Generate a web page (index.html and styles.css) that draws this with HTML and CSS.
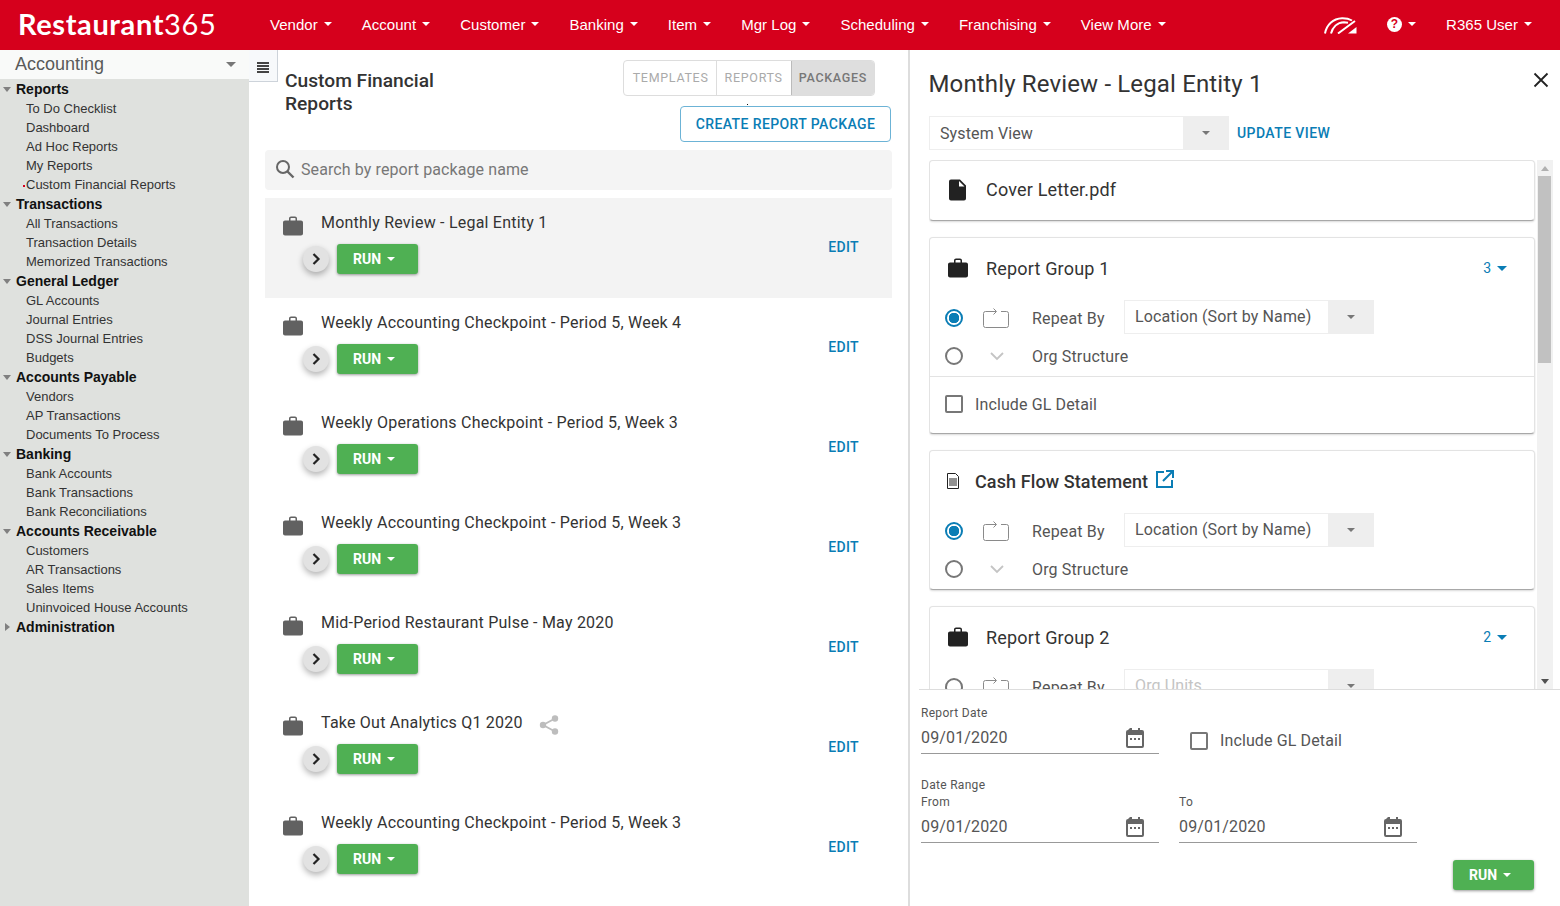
FILE: index.html
```html
<!DOCTYPE html>
<html lang="en">
<head>
<meta charset="utf-8">
<title>Restaurant365</title>
<link rel="stylesheet" href="styles.css">
</head>
<body>
<svg class="defs" width="0" height="0" aria-hidden="true">
  <symbol id="case" viewBox="0 0 24 24"><path fill-rule="evenodd" d="M20 6.500h-4V4.600c0-1.200-.9-2.100-2-2.100h-4c-1.100 0-2 .9-2 2.100v1.900H4c-1.100 0-2 .9-2 2v11c0 1.100.9 2 2 2h16c1.100 0 2-.9 2-2v-11c0-1.100-.9-2-2-2zm-5.500 0h-5V4.500c0-.3.200-.5.500-.5h4c.3 0 .5.200.5.500z"/></symbol>
  <symbol id="repeat" viewBox="0 0 26 20"><path fill="none" stroke="currentColor" d="M13 3.500H2.500a2 2 0 0 0-2 2v12a2 2 0 0 0 2 2h21a2 2 0 0 0 2-2v-12a2 2 0 0 0-2-2H18M10.500.5l3 3-3 3"/></symbol>
  <symbol id="cal" viewBox="0 0 18 20"><path fill="currentColor" fill-rule="evenodd" d="M4 0h2v2h6V0h2v2h2a2 2 0 0 1 2 2v14a2 2 0 0 1-2 2H2a2 2 0 0 1-2-2V4a2 2 0 0 1 2-2zM2 7v11h14V7zm2 3h2v2H4zm4 0h2v2H8zm4 0h2v2h-2z"/></symbol>
  <symbol id="chev" viewBox="0 0 12 14"><path fill="none" stroke="currentColor" stroke-width="2.200" d="M3.500 2l5 5-5 5"/></symbol>
</svg>

<header class="topbar">
  <div class="logo">Restaurant<span class="logo-num">365</span></div>
  <nav class="nav">
    <a class="nav-item">Vendor<i class="caret"></i></a>
    <a class="nav-item">Account<i class="caret"></i></a>
    <a class="nav-item">Customer<i class="caret"></i></a>
    <a class="nav-item">Banking<i class="caret"></i></a>
    <a class="nav-item">Item<i class="caret"></i></a>
    <a class="nav-item">Mgr Log<i class="caret"></i></a>
    <a class="nav-item">Scheduling<i class="caret"></i></a>
    <a class="nav-item">Franchising<i class="caret"></i></a>
    <a class="nav-item">View More<i class="caret"></i></a>
  </nav>
  <div class="top-right">
    <svg class="gauge" width="34" height="17" viewBox="0 0 34 17"><path fill="none" stroke="#fff" stroke-width="2" d="M1 16.500C2.500 8 9 1.500 18 1.200c4-.1 7 .6 10 2.300M7 16.500C8.500 10.500 13 5.500 20 5.200c1.500 0 2.800.2 4 .5M14 16.500L31 4"/><path fill="#fff" d="M24 16.500l8.500-6.500v6.500z"/></svg>
    <div class="help"><span class="help-mark">?</span><i class="caret"></i></div>
    <a class="user">R365 User<i class="caret"></i></a>
  </div>
</header>

<div class="body">
  <aside class="sidebar">
    <div class="side-head"><span>Accounting</span><i class="side-caret"></i></div>
    <ul class="tree">
      <li class="cat">Reports</li>
      <li class="leaf">To Do Checklist</li>
      <li class="leaf">Dashboard</li>
      <li class="leaf">Ad Hoc Reports</li>
      <li class="leaf">My Reports</li>
      <li class="leaf leaf-current">Custom Financial Reports</li>
      <li class="cat">Transactions</li>
      <li class="leaf">All Transactions</li>
      <li class="leaf">Transaction Details</li>
      <li class="leaf">Memorized Transactions</li>
      <li class="cat">General Ledger</li>
      <li class="leaf">GL Accounts</li>
      <li class="leaf">Journal Entries</li>
      <li class="leaf">DSS Journal Entries</li>
      <li class="leaf">Budgets</li>
      <li class="cat">Accounts Payable</li>
      <li class="leaf">Vendors</li>
      <li class="leaf">AP Transactions</li>
      <li class="leaf">Documents To Process</li>
      <li class="cat">Banking</li>
      <li class="leaf">Bank Accounts</li>
      <li class="leaf">Bank Transactions</li>
      <li class="leaf">Bank Reconciliations</li>
      <li class="cat">Accounts Receivable</li>
      <li class="leaf">Customers</li>
      <li class="leaf">AR Transactions</li>
      <li class="leaf">Sales Items</li>
      <li class="leaf">Uninvoiced House Accounts</li>
      <li class="cat cat-closed">Administration</li>
    </ul>
  </aside>

  <main class="main">
    <button class="menu-toggle" aria-label="Toggle menu"><i></i><i></i><i></i><i></i></button>
    <div class="main-head">
      <h1 class="page-title">Custom Financial<br>Reports</h1>
      <div class="main-actions">
        <div class="tabs">
          <span class="tab">TEMPLATES</span>
          <span class="tab">REPORTS</span>
          <span class="tab tab-on">PACKAGES</span>
        </div>
        <i class="speck"></i>
        <button class="btn-outline">CREATE REPORT PACKAGE</button>
      </div>
    </div>
    <div class="search">
      <svg width="20" height="20" viewBox="0 0 20 20"><circle cx="8" cy="8" r="6" fill="none" stroke="#666" stroke-width="2"/><path stroke="#666" stroke-width="2.400" d="M12.500 12.500l6 6"/></svg>
      <span>Search by report package name</span>
    </div>
    <div class="list">
      <article class="pkg pkg-on">
        <div class="pkg-main">
          <div class="pkg-head"><svg class="pkg-icon"><use href="#case"/></svg><span class="pkg-title">Monthly Review - Legal Entity 1</span></div>
          <div class="pkg-actions"><span class="expand"><svg width="12" height="14"><use href="#chev"/></svg></span><button class="run">RUN<i class="caret"></i></button></div>
        </div>
        <a class="edit">EDIT</a>
      </article>
      <article class="pkg">
        <div class="pkg-main">
          <div class="pkg-head"><svg class="pkg-icon"><use href="#case"/></svg><span class="pkg-title">Weekly Accounting Checkpoint - Period 5, Week 4</span></div>
          <div class="pkg-actions"><span class="expand"><svg width="12" height="14"><use href="#chev"/></svg></span><button class="run">RUN<i class="caret"></i></button></div>
        </div>
        <a class="edit">EDIT</a>
      </article>
      <article class="pkg">
        <div class="pkg-main">
          <div class="pkg-head"><svg class="pkg-icon"><use href="#case"/></svg><span class="pkg-title">Weekly Operations Checkpoint - Period 5, Week 3</span></div>
          <div class="pkg-actions"><span class="expand"><svg width="12" height="14"><use href="#chev"/></svg></span><button class="run">RUN<i class="caret"></i></button></div>
        </div>
        <a class="edit">EDIT</a>
      </article>
      <article class="pkg">
        <div class="pkg-main">
          <div class="pkg-head"><svg class="pkg-icon"><use href="#case"/></svg><span class="pkg-title">Weekly Accounting Checkpoint - Period 5, Week 3</span></div>
          <div class="pkg-actions"><span class="expand"><svg width="12" height="14"><use href="#chev"/></svg></span><button class="run">RUN<i class="caret"></i></button></div>
        </div>
        <a class="edit">EDIT</a>
      </article>
      <article class="pkg">
        <div class="pkg-main">
          <div class="pkg-head"><svg class="pkg-icon"><use href="#case"/></svg><span class="pkg-title">Mid-Period Restaurant Pulse - May 2020</span></div>
          <div class="pkg-actions"><span class="expand"><svg width="12" height="14"><use href="#chev"/></svg></span><button class="run">RUN<i class="caret"></i></button></div>
        </div>
        <a class="edit">EDIT</a>
      </article>
      <article class="pkg">
        <div class="pkg-main">
          <div class="pkg-head"><svg class="pkg-icon"><use href="#case"/></svg><span class="pkg-title">Take Out Analytics Q1 2020</span>
            <svg class="share" width="20" height="20" viewBox="0 0 20 20"><path fill="none" stroke="#bdbdbd" stroke-width="1.800" d="M16 3.500L4 10l12 6.500"/><circle cx="16" cy="3.500" r="3.200" fill="#bdbdbd"/><circle cx="4" cy="10" r="3.200" fill="#bdbdbd"/><circle cx="16" cy="16.500" r="3.200" fill="#bdbdbd"/></svg>
          </div>
          <div class="pkg-actions"><span class="expand"><svg width="12" height="14"><use href="#chev"/></svg></span><button class="run">RUN<i class="caret"></i></button></div>
        </div>
        <a class="edit">EDIT</a>
      </article>
      <article class="pkg">
        <div class="pkg-main">
          <div class="pkg-head"><svg class="pkg-icon"><use href="#case"/></svg><span class="pkg-title">Weekly Accounting Checkpoint - Period 5, Week 3</span></div>
          <div class="pkg-actions"><span class="expand"><svg width="12" height="14"><use href="#chev"/></svg></span><button class="run">RUN<i class="caret"></i></button></div>
        </div>
        <a class="edit">EDIT</a>
      </article>
    </div>
  </main>

  <section class="detail">
    <div class="detail-head">
      <h2 class="detail-title">Monthly Review - Legal Entity 1</h2>
      <svg class="close" width="16" height="16" viewBox="0 0 16 16"><path stroke="#222" stroke-width="1.800" d="M1.500 1.500l13 13M14.500 1.500l-13 13"/></svg>
    </div>
    <div class="view-row">
      <div class="select select-view"><span class="select-text">System View</span><span class="select-btn"><i class="gcaret"></i></span></div>
      <a class="update">UPDATE VIEW</a>
    </div>
    <div class="scroller">
      <div class="cards">
        <div class="card">
          <div class="card-head card-head-cover">
            <svg class="head-icon" width="24" height="24" viewBox="0 0 24 24"><path fill="#222" fill-rule="evenodd" d="M5 1.500h9l6 6v13a2 2 0 0 1-2 2H5a2 2 0 0 1-2-2V3.500a2 2 0 0 1 2-2zm8 1.500v5.500h5.500z"/></svg>
            <span class="card-title">Cover Letter.pdf</span>
          </div>
        </div>
        <div class="card">
          <div class="card-head">
            <svg class="head-icon head-case"><use href="#case"/></svg>
            <span class="card-title">Report Group 1</span>
            <span class="count">3<i class="bcaret"></i></span>
          </div>
          <div class="opt-row opt-first">
            <i class="radio radio-on"></i>
            <svg class="repeat" width="26" height="20"><use href="#repeat"/></svg>
            <span class="opt-label">Repeat By</span>
            <div class="select select-opt"><span class="select-text">Location (Sort by Name)</span><span class="select-btn"><i class="gcaret"></i></span></div>
          </div>
          <div class="opt-row opt-second">
            <i class="radio"></i>
            <svg class="chev-down" width="26" height="12" viewBox="0 0 26 12"><path fill="none" stroke="#c4c4c4" stroke-width="1.800" d="M8 3l6 6 6-6"/></svg>
            <span class="opt-label">Org Structure</span>
          </div>
          <div class="card-foot">
            <i class="check"></i><span class="check-label">Include GL Detail</span>
          </div>
        </div>
        <div class="card">
          <div class="card-head">
            <svg class="doc-icon" width="14" height="16" viewBox="0 0 14 16"><path fill="none" stroke="#222" d="M1.500.5h8l3 3v12h-11z"/><path stroke="#222" d="M3 6h8M3 8h8M3 10h8M3 12h8"/></svg>
            <span class="card-title card-title-doc">Cash Flow Statement</span>
            <svg class="ext" width="18" height="18" viewBox="0 0 18 18"><path fill="none" stroke="#0a7db5" stroke-width="2" d="M8 2H1v15h15v-7M7 11l9-9M10 1h7v7"/></svg>
          </div>
          <div class="opt-row opt-first">
            <i class="radio radio-on"></i>
            <svg class="repeat" width="26" height="20"><use href="#repeat"/></svg>
            <span class="opt-label">Repeat By</span>
            <div class="select select-opt"><span class="select-text">Location (Sort by Name)</span><span class="select-btn"><i class="gcaret"></i></span></div>
          </div>
          <div class="opt-row opt-second">
            <i class="radio"></i>
            <svg class="chev-down" width="26" height="12" viewBox="0 0 26 12"><path fill="none" stroke="#c4c4c4" stroke-width="1.800" d="M8 3l6 6 6-6"/></svg>
            <span class="opt-label">Org Structure</span>
          </div>
        </div>
        <div class="card">
          <div class="card-head">
            <svg class="head-icon head-case"><use href="#case"/></svg>
            <span class="card-title">Report Group 2</span>
            <span class="count">2<i class="bcaret"></i></span>
          </div>
          <div class="opt-row opt-first">
            <i class="radio"></i>
            <svg class="repeat" width="26" height="20"><use href="#repeat"/></svg>
            <span class="opt-label">Repeat By</span>
            <div class="select select-opt"><span class="select-text select-muted">Org Units</span><span class="select-btn"><i class="gcaret"></i></span></div>
          </div>
        </div>
      </div>
      <div class="scrollbar">
        <span class="sb-arrow"><i class="sb-up"></i></span>
        <span class="sb-thumb"></span>
        <span class="sb-rest"></span>
        <span class="sb-arrow"><i class="sb-down"></i></span>
      </div>
    </div>
    <div class="form">
      <div class="form-row form-row-top">
        <div class="field">
          <label class="field-label">Report Date</label>
          <div class="field-input"><span>09/01/2020</span><svg class="cal" width="18" height="20"><use href="#cal"/></svg></div>
        </div>
        <div class="form-check"><i class="check"></i><span class="check-label">Include GL Detail</span></div>
      </div>
      <div class="range-label">Date Range</div>
      <div class="form-row">
        <div class="field">
          <label class="field-label">From</label>
          <div class="field-input"><span>09/01/2020</span><svg class="cal" width="18" height="20"><use href="#cal"/></svg></div>
        </div>
        <div class="field">
          <label class="field-label">To</label>
          <div class="field-input"><span>09/01/2020</span><svg class="cal" width="18" height="20"><use href="#cal"/></svg></div>
        </div>
      </div>
      <div class="form-foot"><button class="run">RUN<i class="caret"></i></button></div>
    </div>
  </section>
</div>
</body>
</html>
```
FILE: styles.css
```css
* { box-sizing: border-box; }
html, body { margin: 0; height: 100%; }
body { font-family: Roboto, "Liberation Sans", sans-serif; color: #333; background: #fff; overflow: hidden; width: 1560px; height: 906px; }
.defs { position: absolute; }
h1, h2 { margin: 0; }
ul { list-style: none; margin: 0; padding: 0; }
i { display: block; }
button { font-family: inherit; cursor: pointer; }

.topbar { height: 50px; padding-bottom: 2px; background: #d6001c; color: #fff; display: flex; align-items: center; font-family: "Liberation Sans", Arial, sans-serif; font-size: 15px; letter-spacing: .03px; }
.logo { width: 270px; padding-left: 18px; font-family: Lato, sans-serif; font-weight: 700; font-size: 29px; letter-spacing: .6px; line-height: 48px; }
.logo-num { font-weight: 400; }
.nav { display: flex; }
.nav-item, .user { display: flex; align-items: center; }
.nav-item { margin-right: 30px; }
.caret { width: 0; height: 0; border-left: 4.500px solid transparent; border-right: 4.500px solid transparent; border-top: 4px solid currentColor; margin-left: 6px; }
.top-right { margin-left: auto; display: flex; align-items: center; padding-right: 28px; }
.gauge { margin-right: 29px; margin-top: 2px; }
.help { display: flex; align-items: center; margin-right: 30px; }
.help-mark { width: 15px; height: 15px; border-radius: 50%; background: #fff; color: #d6001c; font-weight: 700; font-size: 12px; line-height: 15px; text-align: center; }

.body { display: flex; height: 856px; }
.sidebar { width: 249px; background: #dfe1de; flex: none; font-family: "Liberation Sans", Arial, sans-serif; }
.side-head { height: 29px; background: #f9faf9; display: flex; align-items: center; justify-content: space-between; padding: 0 13px 0 15px; font-size: 18px; color: #5a5a5a; }
.side-caret { width: 0; height: 0; border-left: 5.500px solid transparent; border-right: 5.500px solid transparent; border-top: 5px solid #777; }
.tree { padding-top: 1px; }
.cat { position: relative; height: 19px; line-height: 19px; margin-top: 1px; padding-left: 16px; font-size: 14px; font-weight: 700; color: #111; }
.tree .cat:first-child { margin-top: 0; }
.cat::before { content: ""; position: absolute; left: 3px; top: 7px; border-left: 4.500px solid transparent; border-right: 4.500px solid transparent; border-top: 5px solid #808080; }
.cat-closed::before { left: 5px; top: 5px; border-top: 4.500px solid transparent; border-bottom: 4.500px solid transparent; border-left: 5px solid #808080; border-right: 0; }
.leaf { position: relative; height: 19px; line-height: 19px; padding: 0 0 0 26px; font-size: 13px; color: #333; }
.leaf-current::before { content: ""; position: absolute; left: 23px; top: 10px; width: 2px; height: 2px; background: #d6001c; }

.main { position: relative; width: 659px; flex: none; padding: 10px 16px 0; overflow: hidden; }
.menu-toggle { position: absolute; left: 0; top: 0; width: 29px; height: 32px; padding: 4px 0 0 8px; background: #f7f9fb; border: 0; border-right: 1px solid #cdd3da; border-bottom: 1px solid #cdd3da; display: flex; flex-direction: column; justify-content: center; gap: 1.500px; }
.menu-toggle i { width: 12px; height: 1.600px; background: #444; }
.main-head { position: relative; height: 90px; display: flex; justify-content: space-between; }
.page-title { padding: 9px 0 0 20px; font-size: 19.200px; font-weight: 500; line-height: 23px; color: #333; }
.main-actions { display: flex; flex-direction: column; align-items: flex-end; margin-right: 1px; }
.tabs { display: flex; height: 36px; margin-right: 16px; border: 1px solid #ddd; border-radius: 4px; overflow: hidden; }
.tab { display: flex; align-items: center; padding: 0 8px 1px; font-size: 12.500px; letter-spacing: .7px; color: #aaa; border-left: 1px solid #ddd; }
.tab:first-child { border-left: 0; padding: 0 7px 1px 9px; }
.tab-on { background: #dedede; color: #777; font-weight: 500; border-left-color: #bbb; padding: 0 7px 1px; }
.speck { position: absolute; right: 144px; top: 44px; width: 1px; height: 1px; background: #111; }
.btn-outline { margin-top: 10px; width: 211px; height: 36px; border: 1px solid #6cb3d6; border-radius: 4px; background: #fff; color: #0a7db5; font-size: 14px; font-weight: 500; letter-spacing: .4px; padding: 0 0 1px; }
.search { height: 40px; background: #f4f4f4; border-radius: 4px; display: flex; align-items: center; gap: 6px; padding: 0 0 2px 10px; font-size: 16px; color: #777; letter-spacing: .1px; }
.list { margin-top: 8px; }
.pkg { height: 100px; display: flex; align-items: center; padding: 0 33px 2px 16px; }
.pkg-on { background: #f3f3f3; }
.pkg-main { flex: 1; align-self: flex-start; padding-top: 14px; }
.pkg-head { display: flex; align-items: center; height: 20px; }
.pkg-icon { width: 24px; height: 24px; fill: #616161; margin-right: 16px; margin-top: 8px; flex: none; }
.pkg-title { font-size: 16px; letter-spacing: .22px; color: #333; }
.share { margin-left: 16px; margin-top: 6px; }
.pkg-actions { display: flex; align-items: center; gap: 8px; margin: 12px 0 0 22px; }
.expand { width: 26px; height: 26px; border-radius: 50%; background: #e2e2e2; display: flex; align-items: center; justify-content: center; color: #222; box-shadow: 0 3px 6px rgba(0,0,0,.3); }
.run { width: 81px; height: 30px; background: #4fb053; color: #fff; border: 0; border-radius: 3px; font-size: 14px; font-weight: 700; display: flex; align-items: center; padding: 0 0 0 16px; box-shadow: 0 1px 3px rgba(0,0,0,.4); }
.edit { font-size: 14px; font-weight: 500; color: #0a7db5; letter-spacing: .35px; }

.detail { width: 652px; flex: none; border-left: 2px solid #ddd; display: flex; flex-direction: column; }
.detail-head { height: 66px; padding: 2px 11px 0 18.500px; display: flex; align-items: center; justify-content: space-between; }
.detail-title { font-size: 24px; font-weight: 400; letter-spacing: .15px; color: #333; }
.close { margin-top: -8px; }
.view-row { display: flex; align-items: center; padding-left: 19px; height: 34px; }
.select { display: flex; align-items: stretch; border: 1px solid #eee; background: #fff; height: 34px; font-size: 16px; }
.select-view { width: 300px; }
.select-view .select-text { line-height: 33px; }
.select-opt { width: 250px; flex: none; margin-top: -2px; }
.select-opt .select-text { line-height: 31px; }
.select-text { flex: 1; padding-left: 10px; color: #555; letter-spacing: .12px; }
.select-muted { color: #c4c4c4; }
.select-btn { width: 45px; background: #eee; display: flex; align-items: center; justify-content: center; }
.gcaret { width: 0; height: 0; border-left: 4.500px solid transparent; border-right: 4.500px solid transparent; border-top: 4.500px solid #777; }
.update { margin-left: 8px; color: #0a7db5; font-size: 14px; font-weight: 500; letter-spacing: .42px; }

.scroller { margin: 10px 0 0 9px; height: 530px; flex: none; display: flex; padding-left: 10px; border-bottom: 1px solid #ddd; overflow: hidden; }
.cards { width: 607px; flex: none; overflow: hidden; padding-right: 1px; }
.card { border: 1px solid #e3e3e3; border-bottom: 1px solid #a8a8a8; border-radius: 4px; margin-bottom: 16px; box-shadow: 0 1px 2px rgba(0,0,0,.15); background: #fff; }
.card-head { height: 60px; display: flex; align-items: center; padding: 0 27px 0 16px; }
.card-head-cover { height: 59px; padding-bottom: 2px; }
.head-icon { flex: none; margin-right: 16px; }
.head-case { width: 24px; height: 24px; fill: #222; }
.card-title { font-size: 18px; letter-spacing: .18px; color: #333; white-space: nowrap; }
.doc-icon { margin-right: 15px; flex: none; }
.card-title-doc { font-weight: 500; font-size: 18px; letter-spacing: .1px; }
.ext { margin: -4px 0 0 8px; }
.count { margin-left: auto; display: flex; align-items: center; font-size: 14px; color: #0a7db5; }
.bcaret { margin-left: 6px; width: 0; height: 0; border-left: 5px solid transparent; border-right: 5px solid transparent; border-top: 5px solid #0a7db5; }
.opt-row { display: flex; align-items: center; padding-left: 15px; font-size: 16px; }
.opt-first { height: 40px; }
.opt-second { height: 36px; margin-bottom: 2px; }
.radio { width: 18px; height: 18px; border-radius: 50%; border: 2px solid #777; flex: none; background: #fff; }
.radio-on { border-color: #0a7db5; background: radial-gradient(circle, #0a7db5 0 5px, #fff 5.500px); }
.repeat { margin-left: 20px; color: #8a8a8a; flex: none; }
.chev-down { margin-left: 20px; flex: none; }
.opt-label { width: 92px; margin-left: 23px; color: #555; letter-spacing: .15px; flex: none; white-space: nowrap; }
.card-foot { border-top: 1px solid #e3e3e3; height: 57px; display: flex; align-items: center; padding: 0 0 2px 15px; }
.check { width: 18px; height: 18px; border: 2px solid #777; border-radius: 2px; flex: none; }
.check-label { margin-left: 12px; font-size: 16px; color: #555; letter-spacing: .12px; }

.scrollbar { margin-left: 1px; width: 16px; background: #f1f1f1; display: flex; flex-direction: column; flex: none; }
.sb-arrow { height: 16px; display: flex; align-items: center; justify-content: center; flex: none; }
.sb-up { border-left: 4px solid transparent; border-right: 4px solid transparent; border-bottom: 5px solid #b0b0b0; }
.sb-down { border-left: 4px solid transparent; border-right: 4px solid transparent; border-top: 5px solid #505050; }
.sb-thumb { margin-left: 1px; width: 13px; height: 187px; background: #c1c1c1; flex: none; }
.sb-rest { flex: 1; }

.form { padding: 16px 0 0 11px; flex: 1; font-size: 16px; }
.form-row { display: flex; gap: 20px; }
.form-row-top { height: 55px; }
.field { width: 238px; }
.field-label { display: block; font-size: 12px; line-height: 15px; color: #555; letter-spacing: .3px; }
.field-input { height: 32px; border-bottom: 1px solid #999; display: flex; align-items: center; justify-content: space-between; padding-right: 15px; color: #555; letter-spacing: .15px; margin-top: 1px; }
.cal { color: #666; flex: none; margin-top: 1px; }
.form-check { display: flex; align-items: center; padding: 14px 0 0 11px; }
.range-label { margin-top: 17px; font-size: 12px; line-height: 15px; margin-bottom: 2px; color: #555; letter-spacing: .3px; }
.form-foot { display: flex; justify-content: flex-end; padding: 17px 26px 0 0; }
```
